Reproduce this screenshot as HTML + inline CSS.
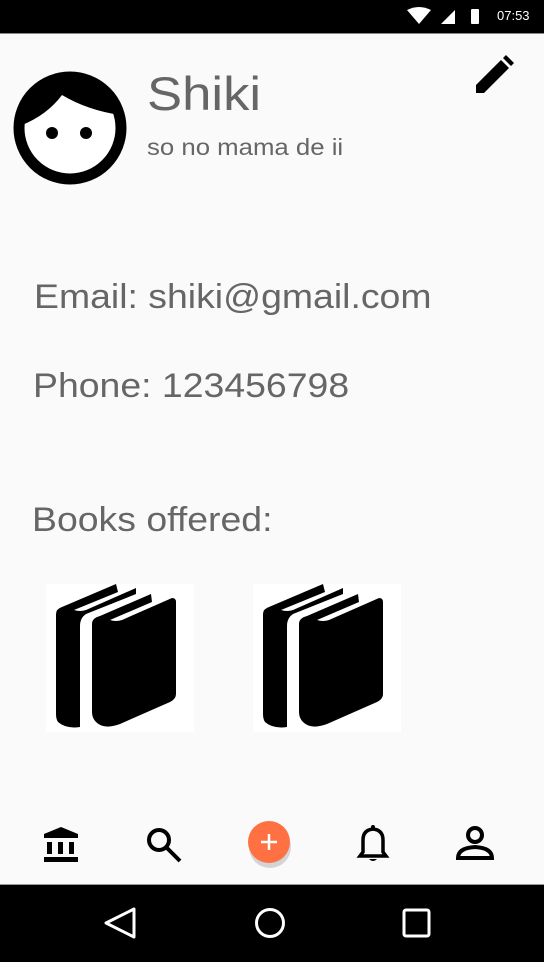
<!DOCTYPE html>
<html><head><style>
*{margin:0;padding:0}
body{width:544px;height:962px;background:#fafafa;position:relative;overflow:hidden;font-family:"Liberation Sans",Arial,sans-serif;color:#666}
.abs{position:absolute}
.sx{transform-origin:0 0;white-space:nowrap}
</style></head><body>
<div class="abs" style="left:0;top:0;width:544px;height:33px;background:#000"></div>
<div class="abs" style="left:497px;top:8px;color:#fff;font-size:13px">07:53</div>
<svg class="abs" style="left:405px;top:6px" width="80" height="20" viewBox="0 0 80 20">
<path d="M2 4 Q14 -2 26 4 L14 18Z" fill="#fff"/>
<path d="M36 18 L50 4 L50 18Z" fill="#fff"/>
<rect x="66" y="3" width="8" height="15" rx="1" fill="#fff"/>
</svg>
<div class="abs" style="left:0;top:33px;width:544px;height:1px;background:#888"></div>

<svg class="abs" style="left:12px;top:70px" width="116" height="116" viewBox="0 0 116 116">
<circle cx="58" cy="58" r="51" fill="#fff" stroke="#000" stroke-width="11"/>
<path d="M10 55 Q35 45 50 25 Q75 40 108 45 Q100 10 58 7 Q15 10 10 55Z" fill="#000"/>
<circle cx="40" cy="63" r="6" fill="#000"/><circle cx="74" cy="63" r="6" fill="#000"/>
</svg>
<div class="abs sx" style="left:147px;top:66px;font-size:47px;transform:scaleX(1.12)">Shiki</div>
<div class="abs sx" style="left:147px;top:134px;font-size:23px;transform:scaleX(1.12)">so no mama de ii</div>
<svg class="abs" style="left:474px;top:55px" width="40" height="40" viewBox="0 0 40 40">
<path d="M2 38 L2 30 L27 5 L35 13 L10 38Z M29 3 L32 0 L40 8 L37 11Z" fill="#000"/>
</svg>
<div class="abs sx" style="left:34px;top:278px;font-size:34px;transform:scaleX(1.1)">Email: shiki@gmail.com</div>
<div class="abs sx" style="left:33px;top:367px;font-size:34px;transform:scaleX(1.1)">Phone: 123456798</div>
<div class="abs sx" style="left:32px;top:501px;font-size:34px;transform:scaleX(1.1)">Books offered:</div>

<svg class="abs" style="left:46px;top:584px" width="148" height="148" viewBox="0 0 148 148">
<rect width="148" height="148" fill="#fff"/>
<path d="M10 30 Q10 25 16 23 L70 0 L72 8 L28 26 Q34 28 40 26 L90 4 L90 10 L40 30 Q34 34 34 42 L34 143 Q20 145 12 138 Q10 135 10 130Z" fill="#000"/>
<path d="M46 40 Q46 34 54 32 L105 10 L106 18 L64 36 Q70 38 76 36 L126 14 Q130 14 130 18 L130 110 Q130 115 124 118 L74 140 Q58 146 50 138 Q46 134 46 128Z" fill="#000"/>
</svg>
<svg class="abs" style="left:253px;top:584px" width="148" height="148" viewBox="0 0 148 148">
<rect width="148" height="148" fill="#fff"/>
<path d="M10 30 Q10 25 16 23 L70 0 L72 8 L28 26 Q34 28 40 26 L90 4 L90 10 L40 30 Q34 34 34 42 L34 143 Q20 145 12 138 Q10 135 10 130Z" fill="#000"/>
<path d="M46 40 Q46 34 54 32 L105 10 L106 18 L64 36 Q70 38 76 36 L126 14 Q130 14 130 18 L130 110 Q130 115 124 118 L74 140 Q58 146 50 138 Q46 134 46 128Z" fill="#000"/>
</svg>

<svg class="abs" style="left:0;top:820px" width="544" height="65" viewBox="0 0 544 65">
<path d="M44 14 L61 7 L78 14 L78 18 L44 18Z" fill="#000"/>
<rect x="47" y="22" width="5" height="12" fill="#000"/><rect x="58" y="22" width="5" height="12" fill="#000"/><rect x="69" y="22" width="5" height="12" fill="#000"/>
<rect x="44" y="37" width="34" height="5" fill="#000"/>
<circle cx="159" cy="20" r="10" fill="none" stroke="#000" stroke-width="4"/>
<path d="M166 27 L180 41" stroke="#000" stroke-width="4"/>
<circle cx="270" cy="27" r="21" fill="#000" opacity=".15"/>
<circle cx="269" cy="22" r="21" fill="#ff7043"/>
<path d="M269 14 V30 M261 22 H277" stroke="#fff" stroke-width="2.5"/>
<path d="M360 36 L363 32 L363 20 Q363 10 373 9 Q383 10 383 20 L383 32 L386 36Z" fill="none" stroke="#000" stroke-width="3.5"/>
<circle cx="373" cy="7" r="2" fill="#000"/><path d="M369 39 Q373 43 377 39Z" fill="#000"/>
<circle cx="475" cy="15" r="7" fill="none" stroke="#000" stroke-width="4"/>
<path d="M458 38 Q458 28 475 27 Q492 28 492 38Z" fill="none" stroke="#000" stroke-width="4"/>
</svg>

<div class="abs" style="left:0;top:885px;width:544px;height:77px;background:#000"></div>
<div class="abs" style="left:0;top:884px;width:544px;height:1px;background:#999"></div>
<svg class="abs" style="left:0;top:885px" width="544" height="77" viewBox="0 0 544 77">
<path d="M134 24 L106 38 L134 52Z" fill="none" stroke="#fff" stroke-width="3" stroke-linejoin="round"/>
<circle cx="270" cy="38" r="13.5" fill="none" stroke="#fff" stroke-width="3"/>
<rect x="404" y="25" width="25" height="26" rx="2" fill="none" stroke="#fff" stroke-width="3"/>
</svg>
</body></html>
